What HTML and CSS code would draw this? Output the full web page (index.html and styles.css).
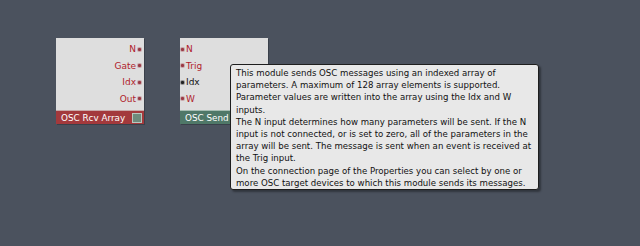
FILE: index.html
```html
<!DOCTYPE html>
<html>
<head>
<meta charset="utf-8">
<link rel="stylesheet" href="styles.css">
</head>
<body>
<div class="canvas">
  <div class="module rcv">
    <div class="ports right">
      <div class="port"><span class="lbl red">N</span><span class="dot red"></span></div>
      <div class="port"><span class="lbl red">Gate</span><span class="dot red"></span></div>
      <div class="port"><span class="lbl red">Idx</span><span class="dot red"></span></div>
      <div class="port"><span class="lbl red">Out</span><span class="dot red"></span></div>
    </div>
    <div class="bar bar-red"><span class="title">OSC Rcv Array</span><span class="chk"></span></div>
  </div>
  <div class="module send">
    <div class="ports left">
      <div class="port"><span class="dot red"></span><span class="lbl red">N</span></div>
      <div class="port"><span class="dot red"></span><span class="lbl red">Trig</span></div>
      <div class="port"><span class="dot black"></span><span class="lbl black">Idx</span></div>
      <div class="port"><span class="dot red"></span><span class="lbl red">W</span></div>
    </div>
    <div class="bar bar-green"><span class="title clip">OSC Send Array</span></div>
  </div>
  <div class="tooltip">
    <div class="line">This module sends OSC messages using an indexed array of</div>
    <div class="line">parameters. A maximum of 128 array elements is supported.</div>
    <div class="line">Parameter values are written into the array using the Idx and W</div>
    <div class="line">inputs.</div>
    <div class="line">The N input determines how many parameters will be sent. If the N</div>
    <div class="line">input is not connected, or is set to zero, all of the parameters in the</div>
    <div class="line">array will be sent. The message is sent when an event is received at</div>
    <div class="line">the Trig input.</div>
    <div class="line">On the connection page of the Properties you can select by one or</div>
    <div class="line">more OSC target devices to which this module sends its messages.</div>
  </div>
</div>
</body>
</html>
```
FILE: styles.css
```css
html, body {
  margin: 0;
  padding: 0;
  background: #4b525e;
  width: 640px;
  height: 246px;
  overflow: hidden;
  font-family: "DejaVu Sans", "Liberation Sans", sans-serif;
}
.canvas {
  position: relative;
  width: 640px;
  height: 246px;
}
.module {
  position: absolute;
  top: 38px;
  width: 88px;
  height: 86px;
  background: #dedede;
  display: flex;
  flex-direction: column;
  box-shadow: 1px 1px 0 #3a404a;
}
.rcv { left: 56px; }
.send { left: 180px; }
.ports {
  flex: 1;
  display: flex;
  flex-direction: column;
  padding-top: 3px;
}
.port {
  height: 16.5px;
  display: flex;
  align-items: center;
  font-size: 9px;
}
.right .port { justify-content: flex-end; padding-right: 3px; }
.left .port { justify-content: flex-start; padding-left: 1px; }
.lbl.red { color: #b01c2c; }
.lbl.black { color: #111; }
.right .lbl { margin-right: 2px; }
.left .lbl { margin-left: 2px; }
.dot {
  width: 3px;
  height: 3px;
  border-radius: 1px;
}
.dot.red { background: #9a3a44; box-shadow: 0 0 0 1px #c9a9ad; }
.dot.black { background: #222; box-shadow: 0 0 0 1px #999; }
.bar {
  height: 13px;
  display: flex;
  align-items: center;
  padding: 0 2px 0 5px;
  color: #fff;
  font-size: 8.8px;
  white-space: nowrap;
  overflow: hidden;
}
.bar-red { background: #a3393c; border-top: 1px solid #c9a9a9; }
.bar-green { background: #4f7868; border-top: 1px solid #a6bdb2; }
.title { flex: 1; }
.title.clip { flex: 0 0 auto; max-width: 45px; overflow: hidden; }
.chk {
  width: 8px;
  height: 8px;
  background: #6e8a7c;
  border: 1px solid #b9c7bf;
}
.tooltip {
  position: absolute;
  left: 230px;
  top: 64px;
  width: 297px;
  height: 115px;
  padding: 2px 5px 7px 5px;
  background: #e8e8e8;
  border: 1px solid #1e1e1e;
  border-radius: 3px;
  box-shadow: 2px 2px 2px rgba(0,0,0,0.35);
  font-size: 8.6px;
  color: #111;
  white-space: nowrap;
}
.line {
  height: 12.2px;
  line-height: 12.2px;
}
```
